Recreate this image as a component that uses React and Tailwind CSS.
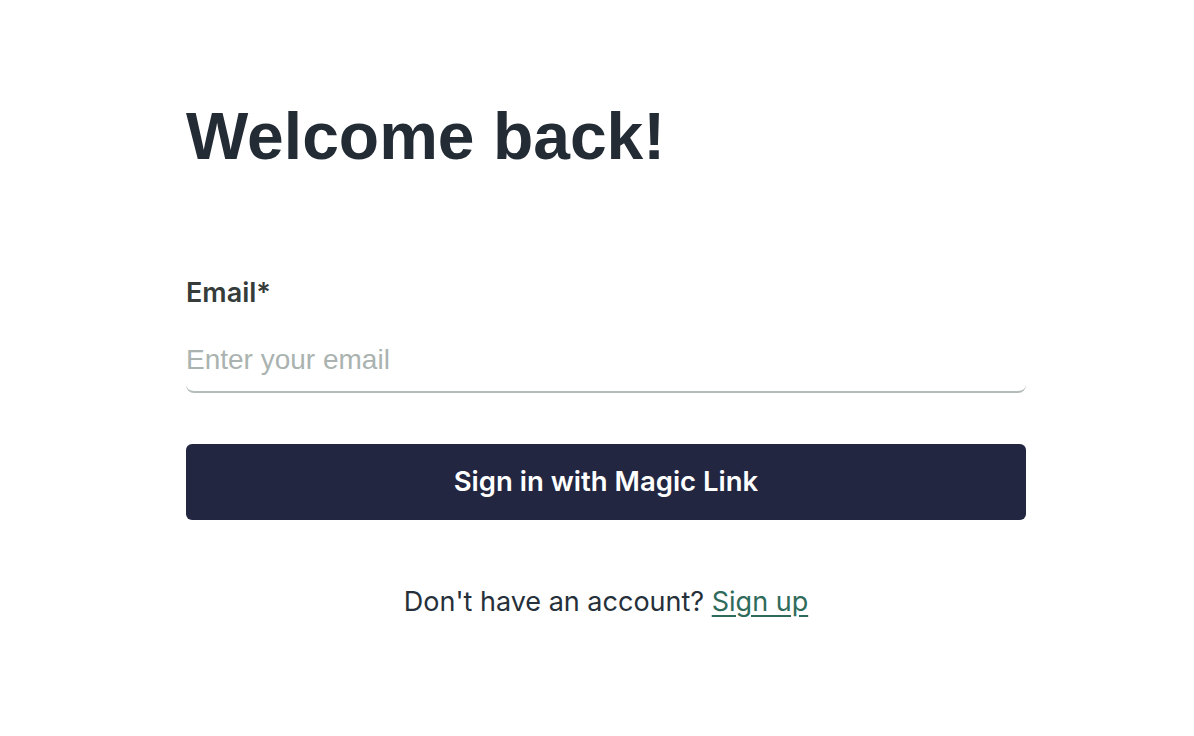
import React from "react";

export default function App() {
  return (
    <div className="min-h-screen bg-white">
      <div className="ml-[186px] w-[840px] pt-[92px]">
        <h1 className="font-['Liberation_Sans',Arial,sans-serif] text-[66px] font-bold leading-[88px] text-[#232b35]">
          Welcome back!
        </h1>

        <form className="mt-[96px]" onSubmit={(e) => e.preventDefault()}>
          <label className="block font-['Inter',sans-serif] text-[27px] font-semibold leading-[34px] text-[#353c3a]">
            Email*
          </label>
          <input
            type="email"
            placeholder="Enter your email"
            className="mt-[18px] block h-[65px] w-full rounded-lg border-b-2 border-[#b3bcb8] bg-white font-['Liberation_Sans',Arial,sans-serif] text-[28px] text-[#232b35] outline-none placeholder:text-[#aab3b0]"
          />
          <button
            type="submit"
            className="mt-[51px] flex h-[76px] w-full items-center justify-center rounded-md bg-[#222641] font-['Inter',sans-serif] text-[27.5px] font-semibold text-white"
          >
            Sign in with Magic Link
          </button>
        </form>

        <p className="mt-[62px] text-center font-['Inter',sans-serif] text-[27px] text-[#26303a]">
          Don't have an account?{" "}
          <a href="#" className="text-[#2f6b5b] underline underline-offset-4">
            Sign up
          </a>
        </p>
      </div>
    </div>
  );
}
